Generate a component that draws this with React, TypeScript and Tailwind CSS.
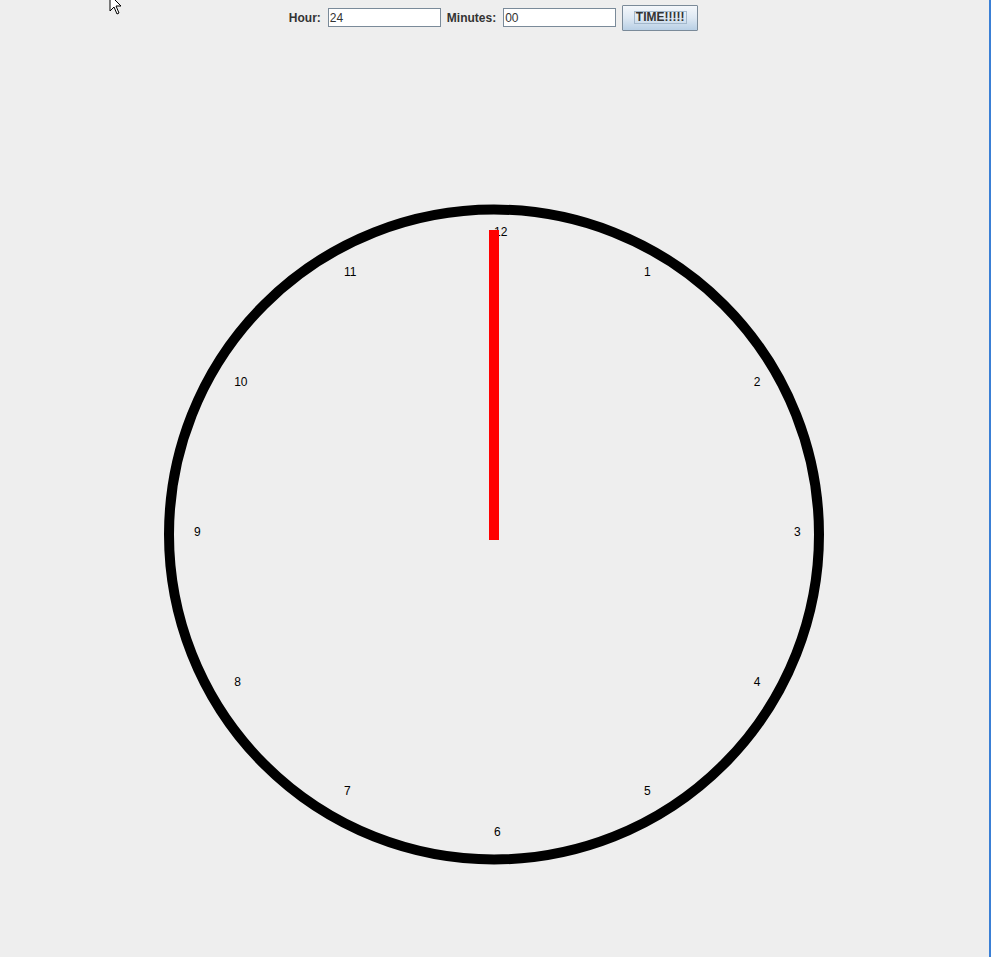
import React from 'react';

const numbers = [12, 1, 2, 3, 4, 5, 6, 7, 8, 9, 10, 11];

const Cursor: React.FC = () => (
  <svg className="absolute left-[109px] top-[-6px]" width="14" height="22" viewBox="0 0 14 22">
    <path d="M1 1 L1 17 L5 13 L8 20 L10 19 L7 12 L12 12 Z" fill="#ffffff" stroke="#000000" strokeWidth="1" strokeLinejoin="miter" />
  </svg>
);

const App: React.FC = () => {
  const cx = 494;
  const cy = 534.5;

  return (
    <div className="relative w-[991px] h-[957px] overflow-hidden bg-[#eeeeee] flex" style={{ fontFamily: '"Liberation Sans", Arial, sans-serif' }}>
      <div className="flex flex-col w-[989px]">
        {/* control bar */}
        <div className="flex justify-center items-center h-[34px] pt-[1px] pr-[2px] text-[12px] text-[#333333]">
          <span className="font-bold mr-[7px]">Hour:</span>
          <div className="w-[113px] h-[19px] bg-white border border-[#7a8a99] flex items-center pl-[1px] leading-none">24</div>
          <span className="font-bold ml-[6px] mr-[7px]">Minutes:</span>
          <div className="w-[113px] h-[19px] bg-white border border-[#7a8a99] flex items-center pl-[1px] leading-none">00</div>
          <button className="ml-[6px] w-[76px] h-[26px] border border-[#7a8a99] rounded-[1px] bg-gradient-to-b from-[#f4f7fb] via-[#dde8f3] to-[#b8cfe5] flex items-center justify-center">
            <span className="font-bold border border-[#a3b8cc] px-[1px] h-[13px] leading-[11px]">TIME!!!!!</span>
          </button>
        </div>

        {/* clock face */}
        <svg width="989" height="923" viewBox="0 34 989 923" className="block">
          <circle cx={cx} cy={cy} r={325} fill="none" stroke="#000000" strokeWidth={10} />
          {numbers.map((n, i) => {
            const a = (i * Math.PI) / 6;
            const x = cx + 300 * Math.sin(a);
            const y = cy - 300 * Math.cos(a) + 1;
            return (
              <text key={n} x={x} y={y} fontSize="12" fill="#000000" fontFamily='"Liberation Sans", Arial, sans-serif'>
                {n}
              </text>
            );
          })}
          <rect x={489} y={230} width={10} height={310} fill="#ff0000" />
        </svg>
      </div>
      {/* window edge */}
      <div className="w-[2px] h-full bg-[#3a7fd5]" />
      <Cursor />
    </div>
  );
};

export default App;
